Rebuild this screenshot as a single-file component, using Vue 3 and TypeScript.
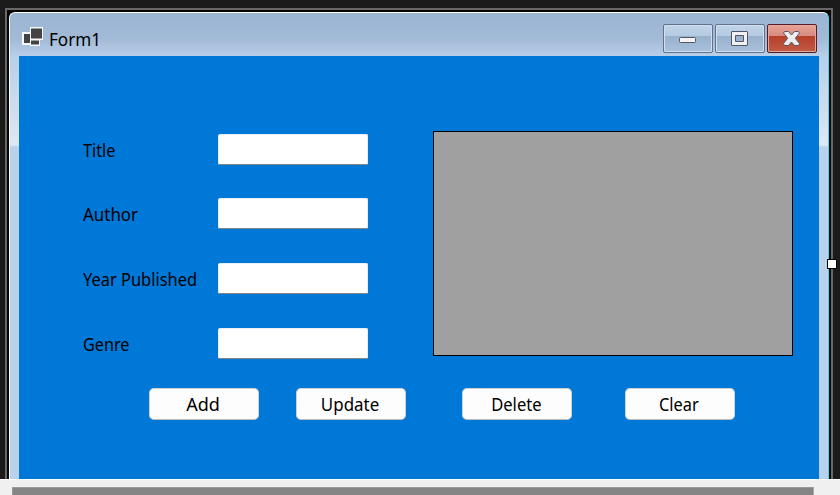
<script setup lang="ts">
import { ref } from 'vue'

interface Field { id: string; label: string; stretch: number }
interface Action { label: string; stretch: number }

const fields: Field[] = [
  { id: 'title', label: 'Title', stretch: 0.9 },
  { id: 'author', label: 'Author', stretch: 0.94 },
  { id: 'year', label: 'Year Published', stretch: 0.912 },
  { id: 'genre', label: 'Genre', stretch: 0.9 },
]
const values = ref<Record<string, string>>({ title: '', author: '', year: '', genre: '' })
const actions: Action[] = [
  { label: 'Add', stretch: 1 },
  { label: 'Update', stretch: 0.94 },
  { label: 'Delete', stretch: 0.92 },
  { label: 'Clear', stretch: 0.91 },
]
</script>

<template>
  <div class="designer">
    <div class="surface">
      <div class="selection">
        <section class="window">
          <header class="titlebar">
            <svg class="app-icon" width="22" height="20" viewBox="0 0 22 20">
              <path d="M0 5H8V0H21V13H18V19H8V18H0Z" fill="#f5f7fa" />
              <path d="M2 7H8V16H2ZM9 1.5H20V11.5H9ZM9 13.5H17V17.5H9Z" fill="#434343" />
            </svg>
            <h1><span class="txt">Form1</span></h1>
            <div class="controls">
              <button class="ctl" aria-label="Minimize">
                <svg width="50" height="29" viewBox="0 0 50 29">
                  <rect x="16.5" y="13.5" width="16" height="5" rx="1" fill="#f4f4f4" stroke="#535666" />
                </svg>
              </button>
              <button class="ctl" aria-label="Maximize">
                <svg width="50" height="29" viewBox="0 0 50 29">
                  <path d="M17 7.5H32Q32.500 7.500 32.500 8V21Q32.500 21.500 32 21.500H17Q16.500 21.500 16.500 21V8Q16.500 7.500 17 7.500ZM20.500 11.500V17.500H28.500V11.500Z" fill="#f0f0f0" fill-rule="evenodd" stroke="#535666" />
                </svg>
              </button>
              <button class="ctl close" aria-label="Close">
                <svg width="50" height="29" viewBox="0 0 50 29">
                  <path d="M17.500 7.500H21.500L24.500 11L27.500 7.500H31.500L32.500 9L28.300 14.300L32.500 19.500L31.500 21.500H27.500L24.500 18L21.500 21.500H17.500L16.500 19.500L20.700 14.300L16.500 9Z" fill="#ededed" stroke="#565765" stroke-linejoin="round" />
                </svg>
              </button>
            </div>
          </header>
          <main class="client">
            <div class="content">
              <form class="fields" @submit.prevent>
                <div v-for="f in fields" :key="f.id" class="field">
                  <label :for="f.id"><span class="txt" :style="{ '--stretch': f.stretch }">{{ f.label }}</span></label>
                  <input :id="f.id" v-model="values[f.id]" type="text" />
                </div>
              </form>
              <div class="datagrid"></div>
            </div>
            <div class="actions">
              <button v-for="a in actions" :key="a.label" class="action">
                <span class="txt" :style="{ '--stretch': a.stretch }">{{ a.label }}</span>
              </button>
            </div>
          </main>
        </section>
        <i class="handle"></i>
      </div>
    </div>
    <footer class="scroll"><div class="thumb"></div></footer>
  </div>
</template>

<style>
body { overflow: hidden; }
</style>

<style scoped>
* { box-sizing: border-box; }
.designer {
  width: 840px; height: 495px; display: flex; flex-direction: column;
  background: #1b1b1b; color: #000; overflow: hidden;
  font: 18px/24px "Noto Sans", "Open Sans", sans-serif;
}
.surface { height: 479px; padding: 8px 7px 0 5px; }
.selection {
  position: relative; width: 828px; height: 471px; padding: 2px 2px 0;
  border: 2px solid #686868; border-bottom: 0; background: #050505;
}
.window {
  width: 820px; height: 467px; padding: 0 9px; overflow: hidden;
  border: solid; border-width: 1px 1px 0; border-color: #fff #3bdcfa #fff #fff;
  border-radius: 6px 6px 0 0;
  background: linear-gradient(#9ab4d2 0, #a2bad6 25px, #b7cfe9 43px, #c5d8ec 75px, #dce8f5 132px, #b9d1ea 134px, #b9d1ea 100%);
}
.titlebar { height: 43px; display: flex; align-items: flex-start; }
.app-icon { margin: 14px 0 0 3px; flex: none; }
h1 { margin: 14px 0 0 5px; font: inherit; }
.txt { display: inline-block; transform: scaleX(var(--stretch, .95)); transform-origin: left; white-space: nowrap; }
.controls { display: flex; gap: 2px; margin: 11px 2px 0 auto; }
.ctl {
  width: 50px; height: 29px; padding: 0; border: 1px solid #62728c; border-radius: 2px;
  background: linear-gradient(#c1d4e8, #b4cae1 41%, #98b1cc 42%, #a9c1dc);
  box-shadow: inset 0 0 0 1px #d2e0ee;
}
.ctl svg { display: block; margin: -1px; }
.close {
  border-color: #551b27;
  background: linear-gradient(#e7a298, #d88a7e 41%, #b8402b 42%, #c15b45);
  box-shadow: inset 0 0 0 1px #e4a79e;
}
.client { width: 800px; height: 423px; padding-top: 75px; background: #0078d7; }
.content { display: flex; height: 225px; padding: 0 26px 0 64px; justify-content: space-between; }
.fields { display: grid; grid-template-rows: 64px 65px 65px 31px; padding-top: 3px; height: 228px; }
.field { display: grid; grid-template-columns: 135px 150px; align-items: start; }
label { padding-top: 4px; }
input {
  width: 150px; height: 31px; padding: 3px 6px; font: inherit; outline: 0;
  border: 1px solid #e8eef4; border-bottom-color: #858585; border-radius: 2px; background: #fff;
}
.datagrid { width: 360px; height: 225px; border: 1px solid #000; background: #a0a0a0; }
.actions { display: grid; grid-template-columns: 147px 166px 163px 110px; padding: 32px 0 0 130px; }
.action {
  width: 110px; height: 32px; padding: 0 2px 1px 0; border: 1px solid #d0d0d0; border-bottom-color: #bcbcbc;
  border-radius: 5px; background: #fdfdfd; color: #000; font: inherit;
}
.action .txt { transform-origin: center; }
.handle { position: absolute; right: -6px; top: 249px; width: 10px; height: 10px; border: 1px solid #000; background: #fff; }
.scroll { height: 16px; padding: 7px 26px 0 12px; border-top: 1px solid #fff; background: #f0f0f0; }
.thumb { height: 8px; background: #858585; border-top: 1px solid #999; border-left: 1px solid #999; border-right: 1px solid #aaa; }
</style>
